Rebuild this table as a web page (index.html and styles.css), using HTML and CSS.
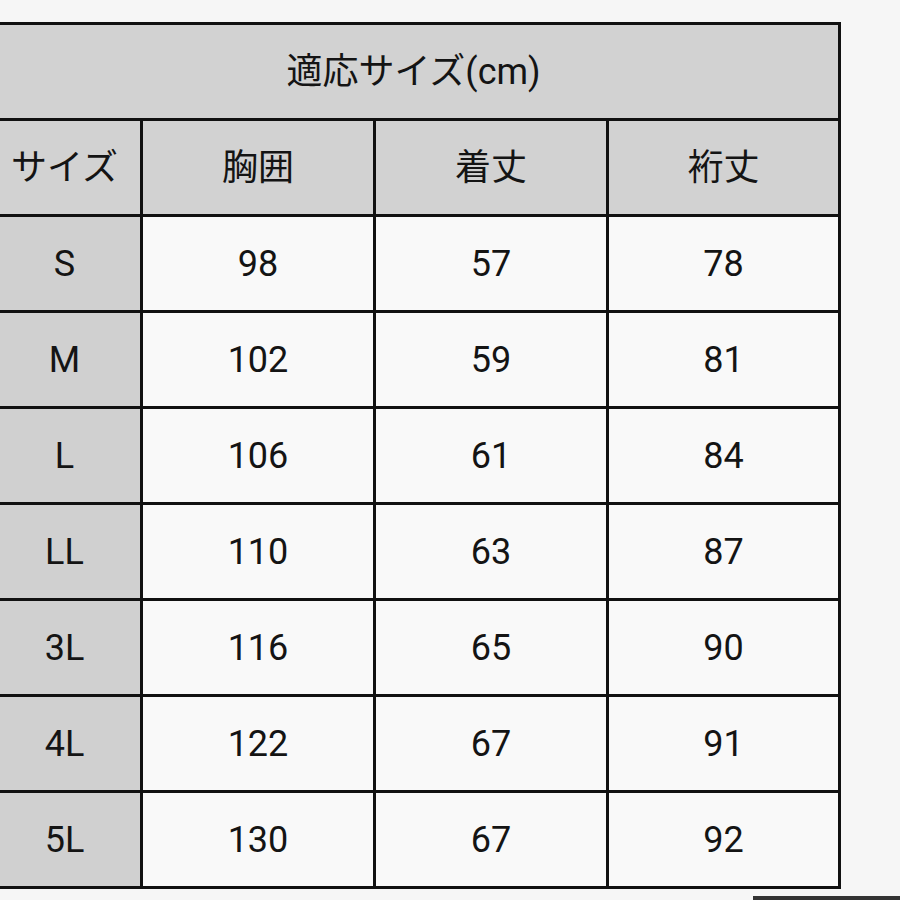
FILE: index.html
```html
<!DOCTYPE html>
<html lang="ja">
<head>
<meta charset="utf-8">
<link rel="stylesheet" href="styles.css">
</head>
<body>
<div class="page">
  <table class="size-table">
    <colgroup>
      <col class="c1"><col class="c2"><col class="c3"><col class="c4">
    </colgroup>
    <tr class="head"><td colspan="4" class="title">適応サイズ(cm)</td></tr>
    <tr class="head"><td class="label">サイズ</td><td>胸囲</td><td>着丈</td><td>裄丈</td></tr>
    <tr><td class="label">S</td><td>98</td><td>57</td><td>78</td></tr>
    <tr><td class="label">M</td><td>102</td><td>59</td><td>81</td></tr>
    <tr><td class="label">L</td><td>106</td><td>61</td><td>84</td></tr>
    <tr><td class="label">LL</td><td>110</td><td>63</td><td>87</td></tr>
    <tr><td class="label">3L</td><td>116</td><td>65</td><td>90</td></tr>
    <tr><td class="label">4L</td><td>122</td><td>67</td><td>91</td></tr>
    <tr><td class="label">5L</td><td>130</td><td>67</td><td>92</td></tr>
  </table>
  <div class="bar"></div>
</div>
</body>
</html>
```
FILE: styles.css
```css
html, body {
  margin: 0;
  padding: 0;
  background: #f6f6f6;
  overflow: hidden;
}
.page {
  width: 900px;
  height: 900px;
  padding-top: 22px;
  box-sizing: border-box;
  font-family: "Roboto", "Noto Sans CJK JP", sans-serif;
  color: #141414;
  overflow: hidden;
}
.size-table {
  border-collapse: collapse;
  table-layout: fixed;
  margin-left: -14px;
  width: 852px;
}
.c1 { width: 154px; }
.c2 { width: 233px; }
.c3 { width: 233px; }
.c4 { width: 232px; }
.size-table tr {
  height: 96px;
}
.size-table td {
  border: 3px solid #111;
  padding: 0;
  text-align: center;
  vertical-align: middle;
  font-size: 36px;
  line-height: 1;
  background: #f9f9f9;
}
.size-table tr.head td {
  background: #d2d2d2;
}
.size-table td.label {
  background: #d0d0d0;
}
.bar {
  margin-top: 7px;
  margin-left: 753px;
  height: 10px;
  background: #333;
}
```
